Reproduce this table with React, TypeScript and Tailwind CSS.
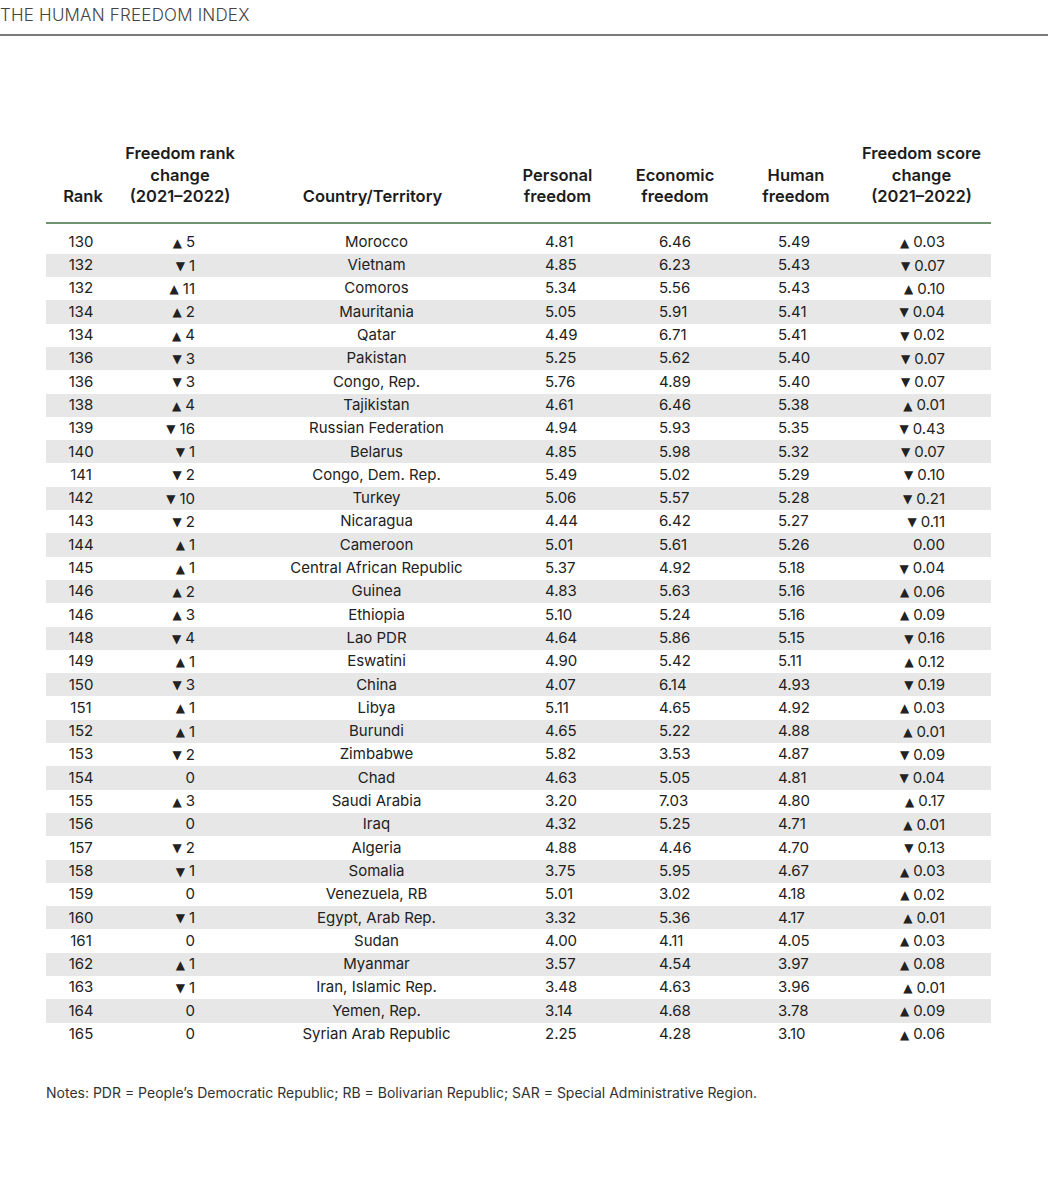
import React from "react";

type Row = [string, string, string, string, string, string, string];

// rank, rank change, country, personal, economic, human, score change
const rows: Row[] = [
  ["130", "▲ 5", "Morocco", "4.81", "6.46", "5.49", "▲ 0.03"],
  ["132", "▼ 1", "Vietnam", "4.85", "6.23", "5.43", "▼ 0.07"],
  ["132", "▲ 11", "Comoros", "5.34", "5.56", "5.43", "▲ 0.10"],
  ["134", "▲ 2", "Mauritania", "5.05", "5.91", "5.41", "▼ 0.04"],
  ["134", "▲ 4", "Qatar", "4.49", "6.71", "5.41", "▼ 0.02"],
  ["136", "▼ 3", "Pakistan", "5.25", "5.62", "5.40", "▼ 0.07"],
  ["136", "▼ 3", "Congo, Rep.", "5.76", "4.89", "5.40", "▼ 0.07"],
  ["138", "▲ 4", "Tajikistan", "4.61", "6.46", "5.38", "▲ 0.01"],
  ["139", "▼ 16", "Russian Federation", "4.94", "5.93", "5.35", "▼ 0.43"],
  ["140", "▼ 1", "Belarus", "4.85", "5.98", "5.32", "▼ 0.07"],
  ["141", "▼ 2", "Congo, Dem. Rep.", "5.49", "5.02", "5.29", "▼ 0.10"],
  ["142", "▼ 10", "Turkey", "5.06", "5.57", "5.28", "▼ 0.21"],
  ["143", "▼ 2", "Nicaragua", "4.44", "6.42", "5.27", "▼ 0.11"],
  ["144", "▲ 1", "Cameroon", "5.01", "5.61", "5.26", "0.00"],
  ["145", "▲ 1", "Central African Republic", "5.37", "4.92", "5.18", "▼ 0.04"],
  ["146", "▲ 2", "Guinea", "4.83", "5.63", "5.16", "▲ 0.06"],
  ["146", "▲ 3", "Ethiopia", "5.10", "5.24", "5.16", "▲ 0.09"],
  ["148", "▼ 4", "Lao PDR", "4.64", "5.86", "5.15", "▼ 0.16"],
  ["149", "▲ 1", "Eswatini", "4.90", "5.42", "5.11", "▲ 0.12"],
  ["150", "▼ 3", "China", "4.07", "6.14", "4.93", "▼ 0.19"],
  ["151", "▲ 1", "Libya", "5.11", "4.65", "4.92", "▲ 0.03"],
  ["152", "▲ 1", "Burundi", "4.65", "5.22", "4.88", "▲ 0.01"],
  ["153", "▼ 2", "Zimbabwe", "5.82", "3.53", "4.87", "▼ 0.09"],
  ["154", "0", "Chad", "4.63", "5.05", "4.81", "▼ 0.04"],
  ["155", "▲ 3", "Saudi Arabia", "3.20", "7.03", "4.80", "▲ 0.17"],
  ["156", "0", "Iraq", "4.32", "5.25", "4.71", "▲ 0.01"],
  ["157", "▼ 2", "Algeria", "4.88", "4.46", "4.70", "▼ 0.13"],
  ["158", "▼ 1", "Somalia", "3.75", "5.95", "4.67", "▲ 0.03"],
  ["159", "0", "Venezuela, RB", "5.01", "3.02", "4.18", "▲ 0.02"],
  ["160", "▼ 1", "Egypt, Arab Rep.", "3.32", "5.36", "4.17", "▲ 0.01"],
  ["161", "0", "Sudan", "4.00", "4.11", "4.05", "▲ 0.03"],
  ["162", "▲ 1", "Myanmar", "3.57", "4.54", "3.97", "▲ 0.08"],
  ["163", "▼ 1", "Iran, Islamic Rep.", "3.48", "4.63", "3.96", "▲ 0.01"],
  ["164", "0", "Yemen, Rep.", "3.14", "4.68", "3.78", "▲ 0.09"],
  ["165", "0", "Syrian Arab Republic", "2.25", "4.28", "3.10", "▲ 0.06"],
];

const cols = "grid grid-cols-[74px_120px_265px_105px_130px_112px_139px]";

function Change({ value }: { value: string }) {
  if (value.startsWith("▲") || value.startsWith("▼")) {
    return (
      <span className="inline-flex items-center gap-[4px]">
        <span className="text-[12px] leading-none font-['DejaVu_Sans',sans-serif]">{value[0]}</span>
        <span>{value.slice(2)}</span>
      </span>
    );
  }
  return <span>{value}</span>;
}

export default function App() {
  return (
    <div className="w-[1048px] h-[1200px] bg-white text-[#222] font-['Inter','Lato',sans-serif]">
      <div className="pt-[4px] pl-0 text-[17px] font-light tracking-[0.2px] text-[#444] leading-[22px]">
        THE HUMAN FREEDOM INDEX
      </div>
      <div className="mt-[8px] h-[2px] bg-[#7a7a7a]" />

      <div className="ml-[46px] w-[945px] mt-[107px]">
        <div className={`${cols} items-end text-[16.5px] font-semibold leading-[21.5px] text-[#1c1c1c] pb-[14px]`}>
          <div className="text-center">Rank</div>
          <div className="text-center">
            Freedom rank
            <br />
            change
            <br />
            (2021–2022)
          </div>
          <div className="text-center">Country/Territory</div>
          <div className="text-center">
            Personal
            <br />
            freedom
          </div>
          <div className="text-center">
            Economic
            <br />
            freedom
          </div>
          <div className="text-center">
            Human
            <br />
            freedom
          </div>
          <div className="text-center">
            Freedom score
            <br />
            change
            <br />
            (2021–2022)
          </div>
        </div>
        <div className="h-[2px] bg-[#6f936f]" />

        <div className="mt-[7px] text-[15px] text-[#222]">
          {rows.map((r, i) => (
            <div
              key={i}
              className={`${cols} h-[23.3px] items-center ${i % 2 === 1 ? "bg-[#e7e7e7]" : "bg-white"}`}
            >
              <div className="text-center pr-[4px]">{r[0]}</div>
              <div className="text-right pr-[45px]">
                <Change value={r[1]} />
              </div>
              <div className="text-center pl-[8px]">{r[2]}</div>
              <div className="text-left pl-[40px]">{r[3]}</div>
              <div className="text-left pl-[49px]">{r[4]}</div>
              <div className="text-left pl-[38px]">{r[5]}</div>
              <div className="text-right pr-[46px]">
                <Change value={r[6]} />
              </div>
            </div>
          ))}
        </div>

        <div className="mt-[36px] text-[14px] text-[#333]">
          Notes: PDR = People’s Democratic Republic; RB = Bolivarian Republic; SAR = Special Administrative Region.
        </div>
      </div>
    </div>
  );
}
